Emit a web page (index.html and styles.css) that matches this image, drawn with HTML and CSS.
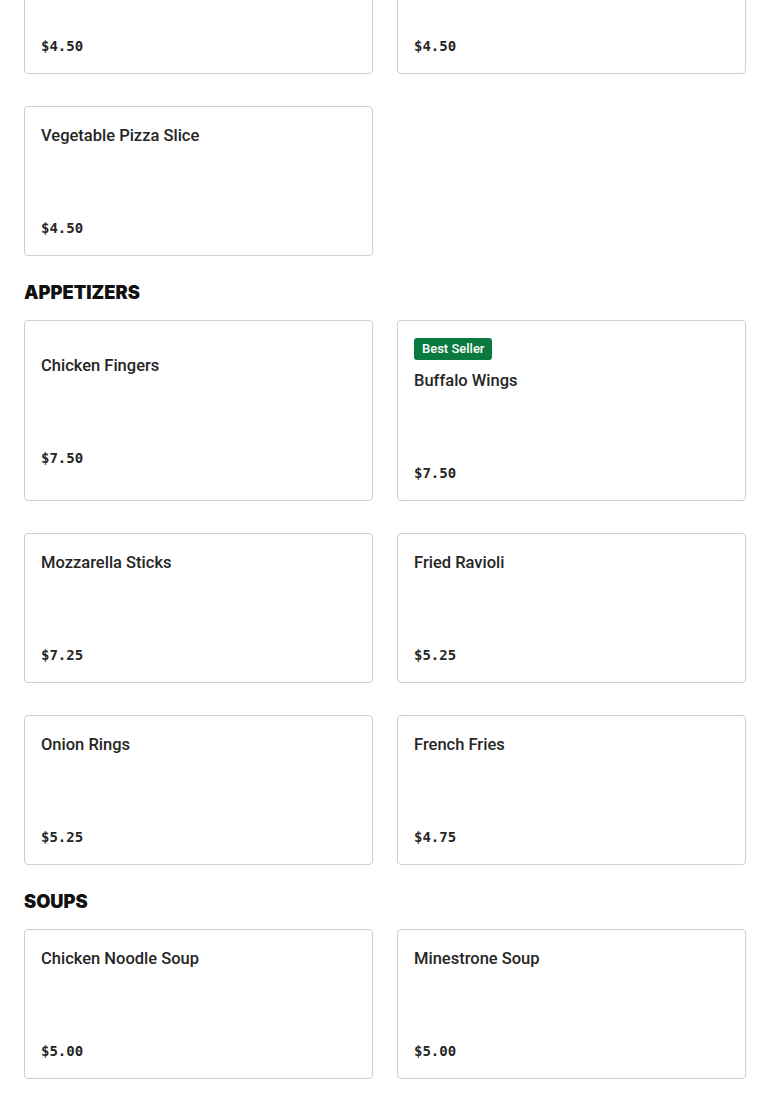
FILE: index.html
```html
<!DOCTYPE html>
<html>
<head>
<meta charset="utf-8">
<link rel="stylesheet" href="styles.css">
</head>
<body>
<main class="menu">
  <section class="section section-first">
    <div class="grid">
      <div class="card"><div class="title">Cheese Pizza Slice</div><div class="price">$4.50</div></div>
      <div class="card"><div class="title">Pepperoni Pizza Slice</div><div class="price">$4.50</div></div>
      <div class="card"><div class="title">Vegetable Pizza Slice</div><div class="price">$4.50</div></div>
    </div>
  </section>
  <section class="section">
    <h2 class="heading">APPETIZERS</h2>
    <div class="grid">
      <div class="card"><div class="title">Chicken Fingers</div><div class="price">$7.50</div></div>
      <div class="card"><div class="top"><span class="badge">Best Seller</span><div class="title">Buffalo Wings</div></div><div class="price">$7.50</div></div>
      <div class="card"><div class="title">Mozzarella Sticks</div><div class="price">$7.25</div></div>
      <div class="card"><div class="title">Fried Ravioli</div><div class="price">$5.25</div></div>
      <div class="card"><div class="title">Onion Rings</div><div class="price">$5.25</div></div>
      <div class="card"><div class="title">French Fries</div><div class="price">$4.75</div></div>
    </div>
  </section>
  <section class="section">
    <h2 class="heading">SOUPS</h2>
    <div class="grid">
      <div class="card"><div class="title">Chicken Noodle Soup</div><div class="price">$5.00</div></div>
      <div class="card"><div class="title">Minestrone Soup</div><div class="price">$5.00</div></div>
    </div>
  </section>
</main>
</body>
</html>
```
FILE: styles.css
```css
html, body {
  margin: 0;
  padding: 0;
  background: #ffffff;
}
body {
  font-family: Roboto, "Noto Sans", sans-serif;
  color: #222222;
}
.menu {
  padding: 0 24px 24px;
  margin-top: -76px;
}
.section {
  margin-bottom: 24px;
}
.heading {
  margin: 0 0 16px;
  font-family: Inter, "Liberation Sans", sans-serif;
  font-weight: 900;
  font-size: 18.3px;
  line-height: 24px;
  letter-spacing: 0;
  color: #111111;
}
.grid {
  display: grid;
  grid-template-columns: 1fr 1fr;
  column-gap: 24px;
  row-gap: 32px;
}
.card {
  box-sizing: border-box;
  min-height: 150px;
  border: 1px solid #cfcfcf;
  border-radius: 4px;
  padding: 17px 16px 17px;
  display: flex;
  flex-direction: column;
  justify-content: center;
  gap: 70px;
}
.top {
  display: flex;
  flex-direction: column;
  align-items: flex-start;
  gap: 9px;
}
.title {
  font-size: 16.5px;
  font-weight: 500;
  line-height: 24px;
  color: #262626;
}
.price {
  font-family: "DejaVu Sans Mono", "Liberation Mono", monospace;
  font-weight: 700;
  font-size: 14px;
  line-height: 20px;
  color: #262626;
}
.badge {
  display: inline-block;
  background: #0b7a3e;
  color: #ffffff;
  font-size: 13px;
  font-weight: 500;
  line-height: 22px;
  padding: 0 8px;
  border-radius: 3px;
}
```
